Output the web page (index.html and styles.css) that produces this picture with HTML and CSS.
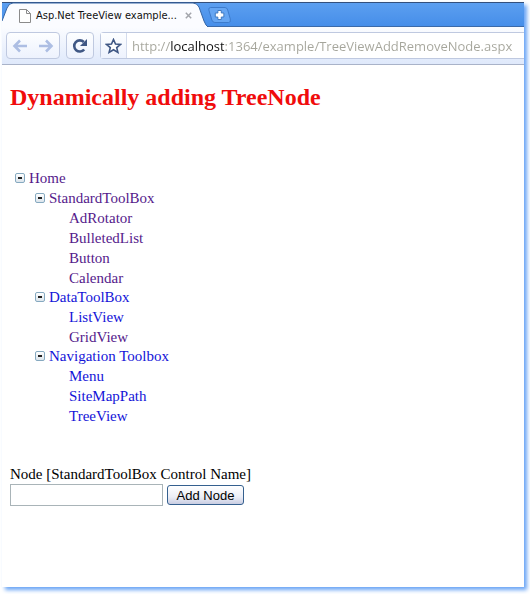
FILE: index.html
```html
<!DOCTYPE html>
<html lang="en">
<head>
	<meta charset="utf-8">
	<title>Asp.Net TreeView example</title>
	<link rel="stylesheet" href="styles.css">
</head>
<body>
	<div class="window">

		<!-- Tab strip -->
		<div class="tab-strip">
			<div class="tab">
				<svg class="tab-shape" viewBox="0 0 206 25" preserveAspectRatio="none" aria-hidden="true">
					<path d="M0 25V19L5 6Q7 1 11 1H191Q195 1 197 5L202 19Q204 24 206 25Z" fill="#fbfcff"/>
					<path d="M0 19L5 6Q7 1 11 1H191Q195 1 197 5L202 19Q204 24 206 25" fill="none" stroke="#3565a5"/>
				</svg>
				<svg class="page-icon" width="12" height="14" viewBox="0 0 12 14" aria-hidden="true">
					<path d="M.5.5H7.5L11.5 4.5V13.5H.5ZM7.5.5V4.5H11.5" fill="#fff" stroke="#8b8b8b"/>
				</svg>
				<span class="tab-title">Asp.Net TreeView example...</span>
				<button class="tab-close" type="button" aria-label="Close tab">
					<svg width="7" height="7" viewBox="0 0 7 7"><path d="M.8.8L6.2 6.2M6.2.8L.8 6.2" stroke="#a3a5ab" stroke-width="1.5"/></svg>
				</button>
			</div>
			<button class="new-tab" type="button" aria-label="New tab">
				<svg width="24" height="16" viewBox="0 0 28 16" preserveAspectRatio="none">
					<path d="M3 .5H20Q22 .5 23 3L26 12Q27 15.500 24 15.500H8Q5.500 15.500 4.500 13L1 3Q.5.500 3 .5Z" fill="#65a5f2" stroke="#3a78c9"/>
					<path d="M11.500 3.500H15.500V6H18.500V10H15.500V12.500H11.500V10H8.500V6H11.500Z" fill="#fff" stroke="#3974bd"/>
				</svg>
			</button>
		</div>

		<!-- Toolbar -->
		<div class="toolbar">
			<div class="group">
				<button class="tool" type="button" aria-label="Back">
					<svg width="16" height="14" viewBox="0 0 16 14"><path d="M15 7H3M8 1.500L2.500 7L8 12.500" fill="none" stroke="#adbee3" stroke-width="2.600"/></svg>
				</button>
				<button class="tool" type="button" aria-label="Forward">
					<svg width="16" height="14" viewBox="0 0 16 14"><path d="M1 7H13M8 1.500L13.500 7L8 12.500" fill="none" stroke="#adbee3" stroke-width="2.600"/></svg>
				</button>
			</div>
			<div class="group">
				<button class="tool" type="button" aria-label="Reload">
					<svg width="16" height="16" viewBox="0 0 16 16"><path d="M12.200 11.500A5.600 5.600 0 1 1 11.800 4" fill="none" stroke="#3f5784" stroke-width="2.600"/><path d="M15 1V8H8Z" fill="#3f5784"/></svg>
				</button>
			</div>
			<div class="group address">
				<button class="tool star" type="button" aria-label="Bookmark this page">
					<svg width="17" height="16" viewBox="0 0 17 16"><path d="M8.500 1.500L10.500 6L15.500 6.400L11.700 9.600L12.900 14.400L8.500 11.800L4.100 14.400L5.300 9.600L1.500 6.400L6.500 6Z" fill="#fff" stroke="#3f5784" stroke-width="1.600"/></svg>
				</button>
				<input class="url" type="text" aria-label="Address" value="http://localhost:1364/example/TreeViewAddRemoveNode.aspx">
			</div>
		</div>

		<!-- Page -->
		<main class="page">
			<h2 class="heading">Dynamically adding TreeNode</h2>

			<ul class="tree">
				<li>
					<div class="parent"><button class="toggle" type="button" aria-label="Collapse Home"></button><a class="visited" href="#">Home</a></div>
					<ul>
						<li>
							<div class="parent"><button class="toggle" type="button" aria-label="Collapse StandardToolBox"></button><a class="visited" href="#">StandardToolBox</a></div>
							<ul>
								<li class="leaf"><a class="visited" href="#">AdRotator</a></li>
								<li class="leaf"><a class="visited" href="#">BulletedList</a></li>
								<li class="leaf"><a class="visited" href="#">Button</a></li>
								<li class="leaf"><a class="visited" href="#">Calendar</a></li>
							</ul>
						</li>
						<li>
							<div class="parent"><button class="toggle" type="button" aria-label="Collapse DataToolBox"></button><a href="#">DataToolBox</a></div>
							<ul>
								<li class="leaf"><a href="#">ListView</a></li>
								<li class="leaf"><a class="visited" href="#">GridView</a></li>
							</ul>
						</li>
						<li>
							<div class="parent"><button class="toggle" type="button" aria-label="Collapse Navigation Toolbox"></button><a href="#">Navigation Toolbox</a></div>
							<ul>
								<li class="leaf"><a href="#">Menu</a></li>
								<li class="leaf"><a href="#">SiteMapPath</a></li>
								<li class="leaf"><a href="#">TreeView</a></li>
							</ul>
						</li>
					</ul>
				</li>
			</ul>

			<form class="add-form">
				<label for="node">Node [StandardToolBox Control Name]</label>
				<div class="add-row">
					<input class="node-input" id="node" type="text">
					<button class="add-button" type="button">Add Node</button>
				</div>
			</form>
		</main>

	</div>
</body>
</html>
```
FILE: styles.css
```css
* {
	margin: 0;
	padding: 0;
	box-sizing: border-box;
}

body {
	min-height: 100vh;
	display: flex;
	padding: 2px 6px 7px 2px; /* Room for the window shadow */
	background-color: #fff;
	font-family: "Liberation Serif", "Times New Roman", serif;
	font-size: 15px;
}

button {
	border: none;
	background: none;
	display: flex;
	align-items: center;
	justify-content: center;
	cursor: pointer;
}

.window {
	flex: 1;
	display: flex;
	flex-direction: column;
	background-color: #fff;
	box-shadow: 3px 3px 4px #6aa5f5;
}

/* Tab strip */
.tab-strip {
	display: flex;
	align-items: center;
	height: 25px;
	border-top: 1px solid #34507c;
	border-bottom: 1px solid #3b6aa9;
	background: linear-gradient(#5c9ff0, #468ee9);
}

.tab {
	position: relative;
	display: flex;
	align-items: center;
	width: 206px;
	height: 25px;
	padding: 2px 16px 0 17px;
}

/* Slanted tab outline behind the title */
.tab-shape {
	position: absolute;
	top: 0;
	left: 0;
	width: 100%;
	height: 100%;
}

.page-icon {
	position: relative;
}

.tab-title {
	position: relative;
	flex: 1;
	margin-left: 5px;
	font-family: "DejaVu Sans Condensed", "DejaVu Sans", sans-serif;
	font-size: 11px;
	white-space: nowrap;
	color: #111;
}

.tab-close {
	position: relative;
}

/* Toolbar */
.toolbar {
	display: flex;
	gap: 6px;
	height: 38px;
	padding: 5px 0 5px 4px;
	border-bottom: 1px solid #a9b3c9;
	background: linear-gradient(#fbfcff, #dfe9fb);
}

.group {
	display: flex;
	border: 1px solid #bfc9e0;
	border-radius: 4px;
	background: linear-gradient(#fdfeff, #edf2fd);
}

.tool {
	width: 26px;
}

.address {
	flex: 1;
	border-right: none;
	border-radius: 4px 0 0 4px;
	background: #fff;
}

.star {
	border-right: 1px solid #d3dbec;
	background: linear-gradient(#fdfeff, #edf2fd);
}

/* Grey url with the host name in black */
.url {
	flex: 1;
	min-width: 0;
	border: none;
	outline: none;
	padding-left: 5px;
	font-family: "Open Sans", "Noto Sans", sans-serif;
	font-size: 13px;
	color: transparent;
	background: linear-gradient(to right, #a5a59b 43px, #111 43px, #111 97px, #a5a59b 97px);
	background-clip: text;
}

/* Page */
.page {
	flex: 1;
	padding: 18px 8px;
}

.heading {
	font-size: 24px;
	line-height: 28px;
	color: #f00c0c;
}

.tree {
	margin-top: 57px;
	padding-left: 5px;
}

.tree,
.tree ul {
	list-style: none;
}

.tree ul {
	padding-left: 20px;
}

.parent {
	display: flex;
	align-items: center;
	gap: 4px;
	height: 20px;
}

.leaf {
	height: 20px;
	padding-left: 14px;
	line-height: 20px;
}

/* Branches close up slightly after their last item */
.leaf:last-child {
	height: 19px;
}

.tree a {
	color: #1414d8;
	text-decoration: none;
}

.tree .visited {
	color: #551a8b;
}

.toggle {
	width: 10px;
	height: 10px;
	border: 1px solid #86a9c0;
	border-radius: 2px;
	background: linear-gradient(#fff, #dce5ec);
}

.toggle::before {
	content: "";
	width: 4px;
	height: 2px;
	background-color: #222;
}

/* Add node form */
.add-form {
	margin-top: 39px;
	line-height: 20px;
}

.add-row {
	display: flex;
	align-items: center;
	gap: 4px;
}

.node-input {
	width: 153px;
	height: 22px;
	padding: 0 4px;
	border: 1px solid #a9b4b8;
}

.add-button {
	width: 77px;
	height: 20px;
	border: 1px solid #35608f;
	border-radius: 3px;
	background: linear-gradient(#fff, #eceef6 60%, #c9cde2);
	font-family: "Liberation Sans", Arial, sans-serif;
	font-size: 13px;
}
```
